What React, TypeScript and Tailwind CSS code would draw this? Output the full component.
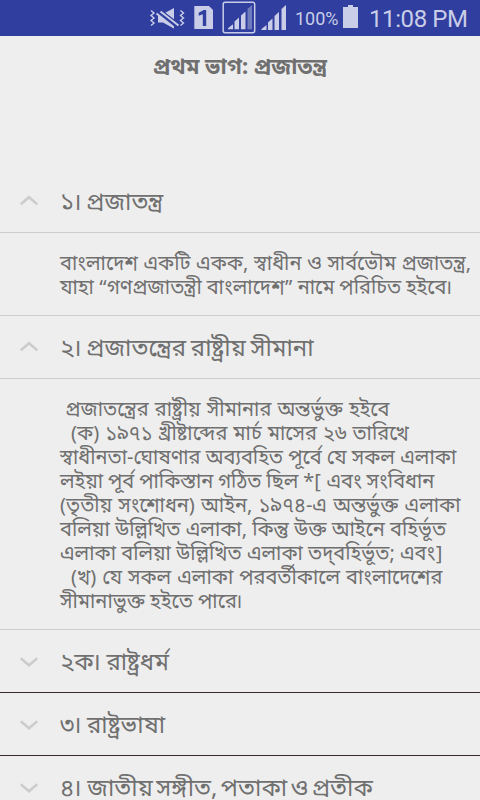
import type { ReactNode } from 'react';

const bn = "font-['Noto_Sans_Bengali','Noto_Sans',sans-serif]";

function Chevron({ up }: { up?: boolean }) {
  return (
    <svg width="18" height="12" viewBox="0 0 18 12" className="ml-[19.5px] mr-[22.5px] shrink-0" fill="none" stroke="#cccccc" strokeWidth="2.500">
      <path d={up ? 'M0.8 9.300 9 2.200l8.200 7.100' : 'M0.8 3.300 9 10.300l8.200-7'} />
    </svg>
  );
}

function Danda({ wide }: { wide?: boolean }) {
  return <span className={wide ? '-ml-[2px] mr-[2.5px]' : '-ml-[2px]'}>।</span>;
}

function Header({ children, up, dark, spacing = '[word-spacing:-0.5px]' }: { children: ReactNode; up?: boolean; dark?: boolean; spacing?: string }) {
  return (
    <div className={`flex h-[63px] shrink-0 items-center border-b ${dark ? 'border-[#3b2a2c]' : 'border-[#cccccc]'}`}>
      <Chevron up={up} />
      <div className={`whitespace-nowrap pt-[6px] text-[24px] leading-[32px] ${spacing}`}>{children}</div>
    </div>
  );
}

function Body({ children }: { children: ReactNode }) {
  return <div className="border-b border-[#cccccc] pb-[14px] pl-[60px] pt-[20px] text-[20px] leading-[24px]">{children}</div>;
}

function Line({ children, spacing = '' }: { children: ReactNode; spacing?: string }) {
  return <div className={`h-6 whitespace-pre ${spacing}`}>{children}</div>;
}

function StatusBar() {
  return (
    <div className="flex h-9 items-center bg-[#303f9f] font-[Roboto,sans-serif] text-[#c9cde7]">
      <svg width="150" height="36" viewBox="140 0 150 36" className="ml-[140px] shrink-0" fill="#c9cde7">
        <path d="M158 14h5l11-6v20.500l-11-6h-5z" />
        <path d="M156 9.500l23 17.500" stroke="#303f9f" strokeWidth="6.500" />
        <path d="M156.500 13.500l17 13.500M160.500 11.500l18 14" stroke="#c9cde7" strokeWidth="1.900" />
        <path d="M151 10.500l3 2.500-3 2.500 3 2.500-3 2.500 3 2.500-3 2.500M180.500 10.500l3 2.500-3 2.500 3 2.500-3 2.500 3 2.500-3 2.500" fill="none" stroke="#c9cde7" strokeWidth="1.400" />
        <path d="M194.300 6H209l4 4v19h-18.700z" />
        <path d="M198.700 12.800l5-2.800h2.500v16h-3.400V14.200l-4.100 1.600z" fill="#303f9f" />
        <rect x="223.200" y="2.200" width="31.500" height="30.500" rx="2" fill="none" stroke="#c9cde7" strokeWidth="1.500" />
        <path d="M228 29.300v-1l5-4v5zM234.500 21.500l4.500-4v11.800h-4.500zM241 15.500l4.500-4v17.800H241z" />
        <path d="M247.500 9l4.500-4v24.300h-4.500z" fill="#707bbd" />
        <path d="M261.500 30v-1l5-4v5zM268 22.500l4.500-4V30H268zM274.500 16l4.500-4V30h-4.500zM281.500 9l4.500-4v25h-4.500z" />
      </svg>
      <span className="ml-[5px] w-[48px] whitespace-nowrap pt-[1px] text-[18px] leading-none">100%</span>
      <svg width="15" height="23" viewBox="0 0 15 23" className="mb-[3px] shrink-0" fill="#c9cde7">
        <path d="M5 0h5v2h5v21H0V2h5z" />
      </svg>
      <span className="ml-[11px] whitespace-nowrap pt-[1px] text-[24px] leading-none tracking-[-0.4px]">11:08 PM</span>
    </div>
  );
}

export default function App() {
  return (
    <div className={`h-[800px] w-[480px] overflow-hidden bg-[#eeeeee] text-[#707070] ${bn}`}>
      <StatusBar />
      <div className="h-[134px] pt-[17px] text-center text-[22px] font-bold leading-[32px]">প্রথম ভাগ: প্রজাতন্ত্র</div>
      <Header up spacing="[word-spacing:-1.5px]">১<Danda /> প্রজাতন্ত্র</Header>
      <Body>
        <Line spacing="[word-spacing:0.4px]">বাংলাদেশ একটি একক, স্বাধীন ও সার্বভৌম প্রজাতন্ত্র,</Line>
        <Line spacing="[word-spacing:-0.4px]">যাহা “গণপ্রজাতন্ত্রী বাংলাদেশ” নামে পরিচিত হইবে<Danda /></Line>
      </Body>
      <Header up spacing="[word-spacing:-1.5px]">২<Danda /> প্রজাতন্ত্রের রাষ্ট্রীয় সীমানা</Header>
      <Body>
        <Line spacing="-ml-[1px] [word-spacing:1px]">{' প্রজাতন্ত্রের রাষ্ট্রীয় সীমানার অন্তর্ভুক্ত হইবে'}</Line>
        <Line spacing="-ml-[1px] [word-spacing:0.8px]">{'  (ক) ১৯৭১ খ্রীষ্টাব্দের মার্চ মাসের ২৬ তারিখে'}</Line>
        <Line>স্বাধীনতা-ঘোষণার অব্যবহিত পূর্বে যে সকল এলাকা</Line>
        <Line spacing="[word-spacing:-0.3px]">লইয়া পূর্ব পাকিস্তান গঠিত ছিল *[ এবং সংবিধান</Line>
        <Line spacing="[word-spacing:1px]">(তৃতীয় সংশোধন) আইন, ১৯৭৪-এ অন্তর্ভুক্ত এলাকা</Line>
        <Line>বলিয়া উল্লিখিত এলাকা, কিন্তু উক্ত আইনে বহির্ভূত</Line>
        <Line>এলাকা বলিয়া উল্লিখিত এলাকা তদ্‌বহির্ভূত; এবং]</Line>
        <Line spacing="-ml-[1px] [word-spacing:0.8px]">{'  (খ) যে সকল এলাকা পরবর্তীকালে বাংলাদেশের'}</Line>
        <Line>সীমানাভুক্ত হইতে পারে<Danda /></Line>
      </Body>
      <Header dark>২ক<Danda /> রাষ্ট্রধর্ম</Header>
      <Header dark>৩<Danda /> রাষ্ট্রভাষা</Header>
      <Header dark spacing="[word-spacing:-2.8px]">৪<Danda wide /> জাতীয় সঙ্গীত, পতাকা ও প্রতীক</Header>
    </div>
  );
}
